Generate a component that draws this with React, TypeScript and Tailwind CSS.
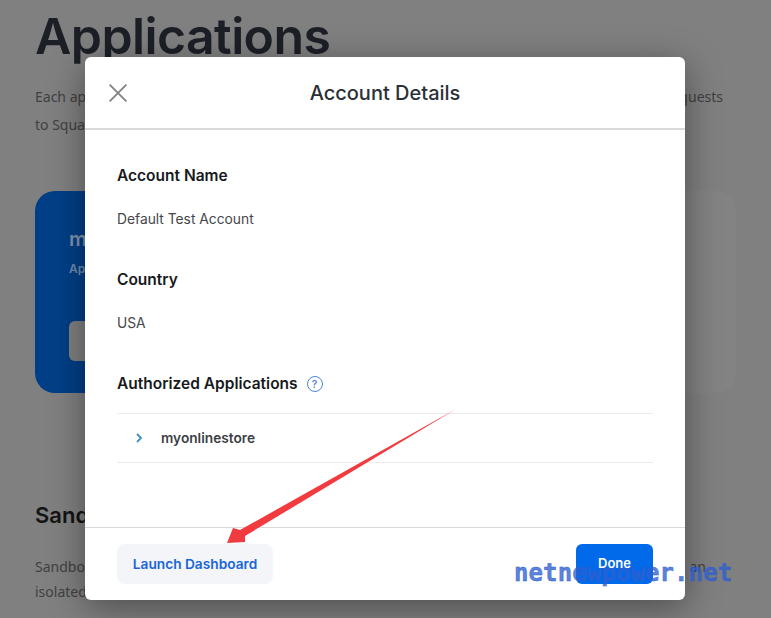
export default function App() {
  return (
    <div className="relative h-[618px] w-[771px] overflow-hidden bg-[#808080] font-['Inter',sans-serif]">
      {/* dimmed page behind the dialog */}
      <div className="px-[35px]">
        <h1 className="mt-[7px] text-[50px] font-semibold leading-[58px] tracking-[-0.6px] text-[#1c1f26]">Applications</h1>
        <p className="mt-[18px] flex justify-between pr-[13px] text-[14px] leading-[28px] text-[#404040] font-['Noto_Sans',sans-serif]">
          <span>Each application</span>
          <span>requests</span>
        </p>
        <p className="text-[14px] leading-[28px] text-[#404040] font-['Noto_Sans',sans-serif]">to Square</p>
        <div className="mt-[52px] flex h-[202px] gap-[16px]">
          <div className="w-[320px] rounded-[20px] bg-[#003f87] px-[34px] pt-[36px]">
            <p className="text-[20px] font-semibold leading-[24px] text-[#8094ad]">myonlinestore</p>
            <p className="mt-[9px] text-[12px] font-semibold text-[#6f8cb0]">Application</p>
            <div className="mt-[43px] h-[40px] w-[120px] rounded-[6px] bg-[#808080]" />
          </div>
          <div className="flex-1 rounded-[20px] bg-[#838383]" />
        </div>
        <h2 className="mt-[108px] text-[22px] font-semibold leading-[28px] text-[#141414]">Sandbox</h2>
        <p className="mt-[25px] flex justify-between pr-[30px] text-[14px] leading-[25px] text-[#404040] font-['Noto_Sans',sans-serif]">
          <span>Sandbox</span>
          <span>an</span>
        </p>
        <p className="text-[14px] leading-[25px] text-[#404040] font-['Noto_Sans',sans-serif]">isolated</p>
      </div>

      {/* dialog */}
      <div className="absolute left-[85px] top-[57px] flex h-[543px] w-[600px] flex-col rounded-[6px] bg-white shadow-[0_8px_36px_rgba(0,0,0,0.4)]">
        <header className="relative flex h-[73px] shrink-0 items-center justify-center border-b-2 border-[#d9d9d9]">
          <button className="absolute left-[24px] top-[27px] text-[#808285]" aria-label="Close">
            <svg width="18" height="18" viewBox="0 0 18 18" fill="none" stroke="currentColor" strokeWidth="1.8">
              <path d="M0.6 0.6 L17.4 17.4 M17.4 0.6 L0.6 17.4" />
            </svg>
          </button>
          <h2 className="text-[20px] font-medium text-[#2b3036]">Account Details</h2>
        </header>

        <div className="flex-1 px-[32px] pt-[36px]">
          <h3 className="text-[15.5px] font-semibold leading-[20px] text-[#17191c]">Account Name</h3>
          <p className="mt-[23px] text-[13.8px] leading-[20px] text-[#44474c]">Default Test Account</p>
          <h3 className="mt-[41px] text-[15.5px] font-semibold leading-[20px] text-[#17191c]">Country</h3>
          <p className="mt-[23px] text-[13.8px] leading-[20px] text-[#44474c]">USA</p>
          <div className="mt-[41px] flex items-center gap-[9px]">
            <h3 className="text-[15.5px] font-semibold leading-[20px] text-[#17191c]">Authorized Applications</h3>
            <span className="flex h-[16px] w-[16px] items-center justify-center rounded-full border-[1.8px] border-[#4a88d8] text-[10px] font-semibold leading-none text-[#4a88d8]">?</span>
          </div>
          <div className="mt-[19px] flex h-[50px] items-center gap-[19px] border-y border-[#ebebeb] pl-[19px]">
            <svg width="6" height="10" viewBox="0 0 6 10" fill="none" stroke="#3f8fc4" strokeWidth="1.8">
              <path d="M1 1 L5 5 L1 9" />
            </svg>
            <span className="text-[13.7px] font-semibold text-[#3b3f45]">myonlinestore</span>
          </div>
        </div>

        <footer className="flex h-[73px] shrink-0 items-center justify-between border-t border-[#d9d9d9] px-[32px]">
          <button className="h-[40px] w-[156px] rounded-[8px] bg-[#f3f5f8] text-[13.7px] font-semibold text-[#1a66d6]">Launch Dashboard</button>
          <button className="h-[40px] w-[77px] rounded-[6px] bg-[#006aea] text-[13px] font-semibold text-white">
            <span className="relative z-10">Done</span>
          </button>
        </footer>
      </div>

      {/* annotation arrow */}
      <svg className="absolute left-0 top-0" width="771" height="618" viewBox="0 0 771 618">
        <path d="M456 409 L245 536 L245 542 L227 543 L233 528 L240 530 Z" fill="#f23b3f" />
      </svg>

      {/* watermark */}
      <span className="absolute left-[514px] top-[559px] font-['DejaVu_Sans_Mono',monospace] text-[24px] font-bold leading-[28px] tracking-[0.1px] text-[#2f5fd0]/80 [-webkit-text-stroke:0.4px_#2f5fd0]">netnewpower.net</span>
    </div>
  );
}
